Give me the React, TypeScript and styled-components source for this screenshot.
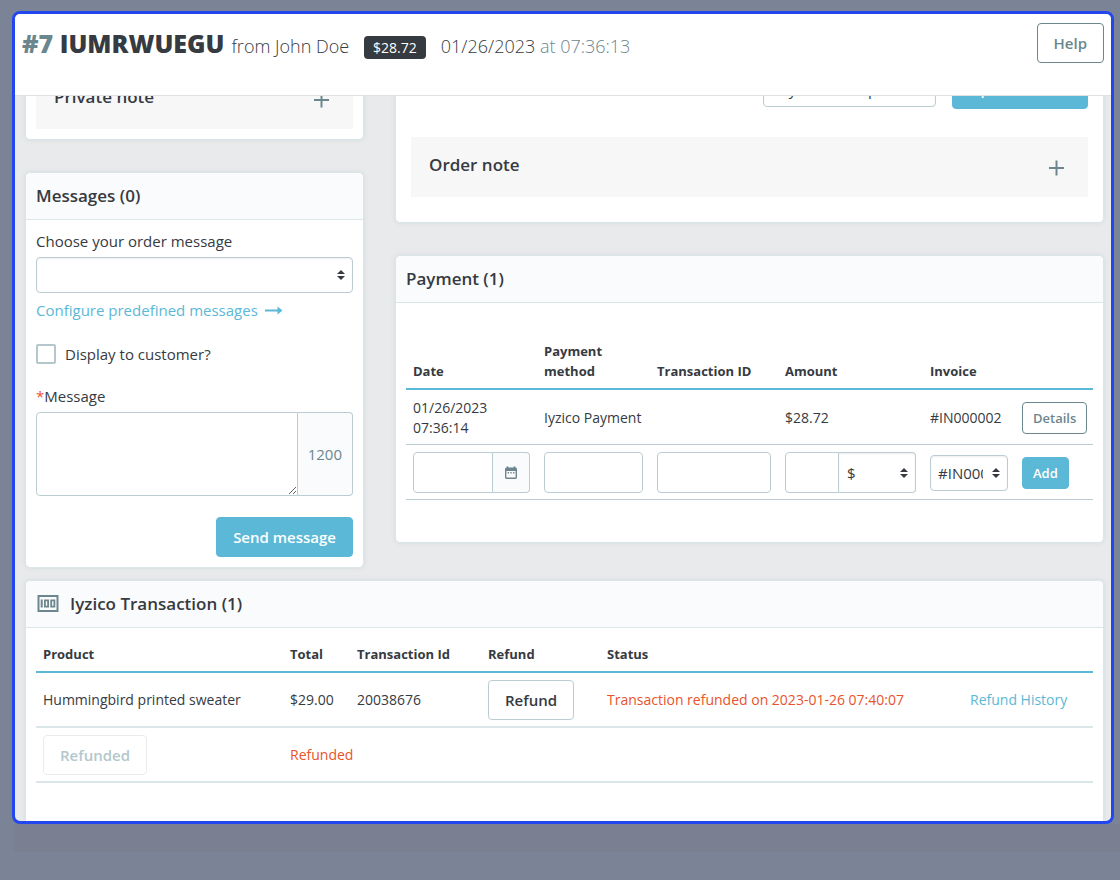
import React from "react";
import styled, { createGlobalStyle, css } from "styled-components";

const GlobalStyle = createGlobalStyle`
  *, *::before, *::after { box-sizing: border-box; }
  body {
    margin: 0;
    background: #7b8397;
    color: #363a41;
    font-family: "Open Sans", "Noto Sans", sans-serif;
    font-size: 15px;
    line-height: 20px;
  }
  button, input, select, textarea { font: inherit; color: inherit; }
`;

const line = "#bbcdd2";
const softLine = "#dbe6e9";
const accent = "#5bb8d6";
const muted = "#6c868e";

const Desk = styled.div`
  padding: 11px 6px 28px 12px;
`;

const Frame = styled.div`
  border: 3px solid #2347ee;
  border-radius: 8px;
  background: #e9eaeb;
  overflow: hidden;
`;

const Underlay = styled.div`
  height: 28px;
  margin: 0 -6px 0 2px;
  background: #7b7f92;
`;

const Header = styled.header`
  display: flex;
  justify-content: space-between;
  align-items: flex-start;
  height: 82px;
  padding: 9px 7px 0 7px;
  background: #fff;
  border-bottom: 1px solid #dfe2e3;
  position: relative;
  z-index: 1;
`;

const Heading = styled.h1`
  display: flex;
  align-items: baseline;
  margin: 0;
  padding-top: 3px;
  font-size: 18px;
  line-height: 34px;
  font-weight: 300;
  white-space: pre;
`;

const OrderRef = styled.strong`
  font-size: 25px;
  font-weight: 800;
  margin-right: 7px;
`;

const Muted = styled.span`
  color: ${muted};
`;

const PriceBadge = styled.span`
  margin: 0 15px;
  padding: 0 9px;
  border-radius: 4px;
  background: #363a41;
  color: #fff;
  font-size: 14px;
  line-height: 23px;
  font-weight: 400;
`;

const Button = styled.button<{ $kind?: "primary" | "outline" | "plain"; $small?: boolean }>`
  padding: 0 ${(p) => (p.$small ? 10 : 16)}px;
  height: ${(p) => (p.$small ? 32 : 40)}px;
  border: 1px solid ${muted};
  border-radius: 4px;
  background: #fff;
  color: ${muted};
  font-size: ${(p) => (p.$small ? 13 : 15)}px;
  font-weight: 600;
  white-space: nowrap;
  ${(p) =>
    p.$kind === "primary" &&
    css`
      background: ${accent};
      border-color: ${accent};
      color: #fff;
    `}
  ${(p) =>
    p.$kind === "plain" &&
    css`
      border-color: ${line};
      color: #363a41;
    `}
  &:disabled {
    border-color: #eaebec;
    color: #b3c7cd;
  }
`;

const Content = styled.main`
  padding: 0 7px 0 10px;
`;

const Columns = styled.div`
  display: grid;
  grid-template-columns: minmax(0, 339fr) minmax(0, 709fr);
  column-gap: 31px;
  align-items: start;
  margin-top: -28px;
`;

const Column = styled.div`
  display: flex;
  flex-direction: column;
  gap: 32px;
`;

const Card = styled.section`
  background: #fff;
  border: 1px solid ${softLine};
  border-radius: 5px;
  box-shadow: 0 0 4px rgba(187, 205, 210, 0.5);
`;

const BottomCard = styled(Card)`
  margin-top: 12px;
  border-bottom: 0;
  border-radius: 5px 5px 0 0;
`;

const CardTitle = styled.h2`
  display: flex;
  align-items: center;
  gap: 10px;
  margin: 0;
  padding: 0 10px;
  height: 47px;
  background: #fafbfc;
  border-bottom: 1px solid ${softLine};
  border-radius: 5px 5px 0 0;
  font-size: 17px;
  font-weight: 600;
`;

const NoteCardBody = styled.div`
  padding: 0 10px 10px;
`;

const OrderCardBody = styled.div`
  padding: 0 15px 25px;
`;

const NoteBar = styled.div`
  display: flex;
  justify-content: space-between;
  align-items: flex-start;
  height: 60px;
  padding: 18px 22px 0 18px;
  background: #f7f7f7;
`;

const NoteTitle = styled.h3`
  margin: 0;
  font-size: 17px;
  font-weight: 600;
`;

const IconButton = styled.button`
  display: flex;
  padding: 4px 0 0;
  border: 0;
  background: none;
  color: ${muted};
`;

const StatusRow = styled.div`
  display: flex;
  justify-content: flex-end;
  align-items: center;
  gap: 16px;
  padding-bottom: 28px;
`;

const Box = styled.div<{ $width?: number }>`
  width: ${(p) => (p.$width ? p.$width + "px" : "100%")};
`;

const SelectWrap = styled.span`
  position: relative;
  display: block;
  flex: 1;
  min-width: 0;
`;

const SelectBox = styled.select<{ $tall?: boolean; $joined?: boolean }>`
  display: block;
  width: 100%;
  height: ${(p) => (p.$tall ? 41 : 36)}px;
  padding: 0 24px 0 ${(p) => (p.$joined ? 8 : 7)}px;
  appearance: none;
  border: 1px solid ${line};
  border-radius: ${(p) => (p.$joined ? "0 4px 4px 0" : "4px")};
  border-left-width: ${(p) => (p.$joined ? 0 : 1)}px;
  background: #fff;
  box-shadow: inset 0 1px 2px rgba(0, 0, 0, 0.07);
  font-size: 15px;
  text-overflow: clip;
`;

const Carets = styled.svg`
  position: absolute;
  right: 7px;
  top: 50%;
  margin-top: -6px;
  pointer-events: none;
`;

const MessageForm = styled.form`
  padding: 11px 10px 10px;
`;

const Label = styled.label`
  display: block;
  margin-bottom: 6px;
`;

const Link = styled.a`
  display: inline-flex;
  align-items: center;
  gap: 7px;
  color: ${accent};
  text-decoration: none;
`;

const LinkLine = styled.p`
  margin: 7px 0 24px;
  line-height: 20px;
  display: flex;
`;

const CheckLine = styled.label`
  display: flex;
  align-items: center;
  gap: 9px;
  margin-bottom: 22px;
`;

const Checkbox = styled.input`
  appearance: none;
  width: 20px;
  height: 20px;
  margin: 0;
  border: 2px solid #b3c7cd;
  border-radius: 2px;
  background: #fff;
`;

const Required = styled.span`
  color: #f54c3e;
`;

const Group = styled.div`
  display: flex;
  align-items: stretch;
`;

const TextArea = styled.textarea`
  flex: 1;
  min-width: 0;
  height: 84px;
  padding: 8px;
  border: 1px solid ${line};
  border-radius: 4px 0 0 4px;
  background: #fff;
  resize: vertical;
`;

const Addon = styled.span`
  display: flex;
  align-items: center;
  padding: 0 10px;
  border: 1px solid ${line};
  border-left: 0;
  border-radius: 0 4px 4px 0;
  background: #fafbfc;
  color: ${muted};
`;

const DateButton = styled.button`
  display: flex;
  align-items: center;
  padding: 0 12px;
  border: 1px solid ${line};
  border-left: 0;
  border-radius: 0 4px 4px 0;
  background: #fafbfc;
  color: ${muted};
`;

const TextInput = styled.input<{ $joined?: boolean; $width?: number }>`
  display: block;
  width: ${(p) => (p.$width ? p.$width + "px" : "100%")};
  min-width: 0;
  height: 41px;
  padding: 0 8px;
  border: 1px solid ${line};
  border-radius: ${(p) => (p.$joined ? "4px 0 0 4px" : "4px")};
  background: #fff;
`;

const FormEnd = styled.div`
  display: flex;
  justify-content: flex-end;
  margin-top: 21px;
`;

const TableBody = styled.div<{ $top: number; $bottom: number }>`
  padding: ${(p) => p.$top}px 10px ${(p) => p.$bottom}px;
`;

const Table = styled.table`
  width: 100%;
  table-layout: fixed;
  border-collapse: separate;
  border-spacing: 0;
  font-size: 14px;
`;

const Col = styled.col<{ $w: number }>`
  width: ${(p) => p.$w}px;
`;

const Th = styled.th`
  padding: 7px;
  border-bottom: 2px solid ${accent};
  text-align: left;
  vertical-align: bottom;
  font-size: 13px;
  font-weight: 700;
`;

const Td = styled.td`
  padding: 7px 7px 6px;
  height: 55px;
  border-bottom: 1px solid ${line};
  vertical-align: middle;
`;

const WideTd = styled(Td)`
  padding: 7px 7px 6px;
  border-bottom: 2px solid ${softLine};
`;

const Alert = styled.span`
  color: #e8532c;
`;

const UpDown = () => (
  <Carets width="10" height="12" viewBox="0 0 10 12" fill="#363a41" aria-hidden="true">
    <path d="M1 5 L5 1 L9 5 Z M1 7 L9 7 L5 11 Z" />
  </Carets>
);

const Plus = () => (
  <svg width="18" height="18" viewBox="0 0 18 18" stroke="currentColor" strokeWidth="2" aria-hidden="true">
    <path d="M8.500 1.500 V16.500 M1 9 H16" />
  </svg>
);

const Arrow = () => (
  <svg width="18" height="10" viewBox="0 0 18 10" fill="currentColor" aria-hidden="true">
    <path d="M0 4.500 H12.500 V1.500 L17.500 5.500 L12.500 9.500 V6.500 H0 Z" />
  </svg>
);

const Calendar = () => (
  <svg width="12" height="14" viewBox="0 0 12 14" fill="currentColor" aria-hidden="true">
    <path
      fillRule="evenodd"
      d="M1.500 0.500 H3.500 V1.500 H8.500 V0.500 H10.500 V1.500 Q12 1.500 12 3 V11.600 Q12 13 10.500 13 H1.500 Q0 13 0 11.600 V3 Q0 1.500 1.500 1.500 Z M1.400 5 V11.600 H10.600 V5 Z"
    />
    <path d="M2.600 6 H4 V7.400 H2.600 Z M5.300 6 H6.700 V7.400 H5.300 Z M8 6 H9.400 V7.400 H8 Z" />
  </svg>
);

const Banknote = () => (
  <svg width="24" height="18" viewBox="-1 0 24 18" fill={muted} aria-hidden="true">
    <path
      fillRule="evenodd"
      d="M0.500 0 H21.500 V17 H0.500 Z M2.500 2 V15 H19.500 V2 Z"
    />
    <path d="M3.700 4.500 H5.700 V12.500 H3.700 Z" />
    <path fillRule="evenodd" d="M7 4.500 H12 V12.500 H7 Z M8.800 6.300 V10.700 H10.200 V6.300 Z" />
    <path fillRule="evenodd" d="M13.300 4.500 H18.300 V12.500 H13.300 Z M15.100 6.300 V10.700 H16.500 V6.300 Z" />
  </svg>
);

export default function App() {
  return (
    <>
      <GlobalStyle />
      <Desk>
        <Frame>
          <Header>
            <Heading>
              <OrderRef>
                <Muted>#7</Muted> IUMRWUEGU
              </OrderRef>
              <span>from John Doe</span>
              <PriceBadge>$28.72</PriceBadge>
              <span>
                01/26/2023 <Muted>at 07:36:13</Muted>
              </span>
            </Heading>
            <Button type="button">Help</Button>
          </Header>
          <Content>
            <Columns>
              <Column>
                <Card>
                  <NoteCardBody>
                    <NoteBar>
                      <NoteTitle>Private note</NoteTitle>
                      <IconButton type="button" aria-label="Open private note">
                        <Plus />
                      </IconButton>
                    </NoteBar>
                  </NoteCardBody>
                </Card>
                <Card>
                  <CardTitle>Messages (0)</CardTitle>
                  <MessageForm>
                    <Label htmlFor="order-message">Choose your order message</Label>
                    <SelectWrap>
                      <SelectBox id="order-message" />
                      <UpDown />
                    </SelectWrap>
                    <LinkLine>
                      <Link href="#messages">
                        Configure predefined messages <Arrow />
                      </Link>
                    </LinkLine>
                    <CheckLine>
                      <Checkbox type="checkbox" />
                      Display to customer?
                    </CheckLine>
                    <Label htmlFor="message">
                      <Required>*</Required>Message
                    </Label>
                    <Group>
                      <TextArea id="message" />
                      <Addon>1200</Addon>
                    </Group>
                    <FormEnd>
                      <Button type="button" $kind="primary">
                        Send message
                      </Button>
                    </FormEnd>
                  </MessageForm>
                </Card>
              </Column>
              <Column>
                <Card>
                  <OrderCardBody>
                    <StatusRow>
                      <Box $width={173}>
                        <SelectWrap>
                          <SelectBox aria-label="Order status">
                            <option>Payment accepted</option>
                          </SelectBox>
                        </SelectWrap>
                      </Box>
                      <Button type="button" $kind="primary">
                        Update status
                      </Button>
                    </StatusRow>
                    <NoteBar>
                      <NoteTitle>Order note</NoteTitle>
                      <IconButton type="button" aria-label="Open order note">
                        <Plus />
                      </IconButton>
                    </NoteBar>
                  </OrderCardBody>
                </Card>
                <Card>
                  <CardTitle>Payment (1)</CardTitle>
                  <TableBody $top={31} $bottom={42}>
                    <Table>
                      <colgroup>
                        <Col $w={131} />
                        <Col $w={113} />
                        <Col $w={128} />
                        <Col $w={145} />
                        <Col $w={92} />
                        <Col $w={78} />
                      </colgroup>
                      <thead>
                        <tr>
                          <Th>Date</Th>
                          <Th>Payment method</Th>
                          <Th>Transaction ID</Th>
                          <Th>Amount</Th>
                          <Th>Invoice</Th>
                          <Th aria-label="Actions" />
                        </tr>
                      </thead>
                      <tbody>
                        <tr>
                          <Td>01/26/2023 07:36:14</Td>
                          <Td>Iyzico Payment</Td>
                          <Td />
                          <Td>$28.72</Td>
                          <Td>#IN000002</Td>
                          <Td>
                            <Button type="button" $small>
                              Details
                            </Button>
                          </Td>
                        </tr>
                        <tr>
                          <Td>
                            <Group>
                              <TextInput $joined aria-label="Payment date" />
                              <DateButton type="button" aria-label="Pick a date">
                                <Calendar />
                              </DateButton>
                            </Group>
                          </Td>
                          <Td>
                            <TextInput aria-label="Payment method" />
                          </Td>
                          <Td>
                            <TextInput aria-label="Transaction ID" />
                          </Td>
                          <Td>
                            <Group>
                              <TextInput $joined $width={54} aria-label="Amount" />
                              <SelectWrap>
                                <SelectBox $tall $joined aria-label="Currency">
                                  <option>$</option>
                                </SelectBox>
                                <UpDown />
                              </SelectWrap>
                            </Group>
                          </Td>
                          <Td>
                            <SelectWrap>
                              <SelectBox aria-label="Invoice">
                                <option>#IN000002</option>
                              </SelectBox>
                              <UpDown />
                            </SelectWrap>
                          </Td>
                          <Td>
                            <Button type="button" $kind="primary" $small>
                              Add
                            </Button>
                          </Td>
                        </tr>
                      </tbody>
                    </Table>
                  </TableBody>
                </Card>
              </Column>
            </Columns>
            <BottomCard>
              <CardTitle>
                <Banknote /> Iyzico Transaction (1)
              </CardTitle>
              <TableBody $top={9} $bottom={38}>
                <Table>
                  <colgroup>
                    <Col $w={247} />
                    <Col $w={67} />
                    <Col $w={131} />
                    <Col $w={119} />
                    <Col $w={363} />
                    <Col $w={130} />
                  </colgroup>
                  <thead>
                    <tr>
                      <Th>Product</Th>
                      <Th>Total</Th>
                      <Th>Transaction Id</Th>
                      <Th>Refund</Th>
                      <Th>Status</Th>
                      <Th aria-label="History" />
                    </tr>
                  </thead>
                  <tbody>
                    <tr>
                      <WideTd>Hummingbird printed sweater</WideTd>
                      <WideTd>$29.00</WideTd>
                      <WideTd>20038676</WideTd>
                      <WideTd>
                        <Button type="button" $kind="plain">
                          Refund
                        </Button>
                      </WideTd>
                      <WideTd>
                        <Alert>Transaction refunded on 2023-01-26 07:40:07</Alert>
                      </WideTd>
                      <WideTd>
                        <Link href="#history">Refund History</Link>
                      </WideTd>
                    </tr>
                    <tr>
                      <WideTd>
                        <Button type="button" $kind="plain" disabled>
                          Refunded
                        </Button>
                      </WideTd>
                      <WideTd colSpan={5}>
                        <Alert>Refunded</Alert>
                      </WideTd>
                    </tr>
                  </tbody>
                </Table>
              </TableBody>
            </BottomCard>
          </Content>
        </Frame>
        <Underlay />
      </Desk>
    </>
  );
}
